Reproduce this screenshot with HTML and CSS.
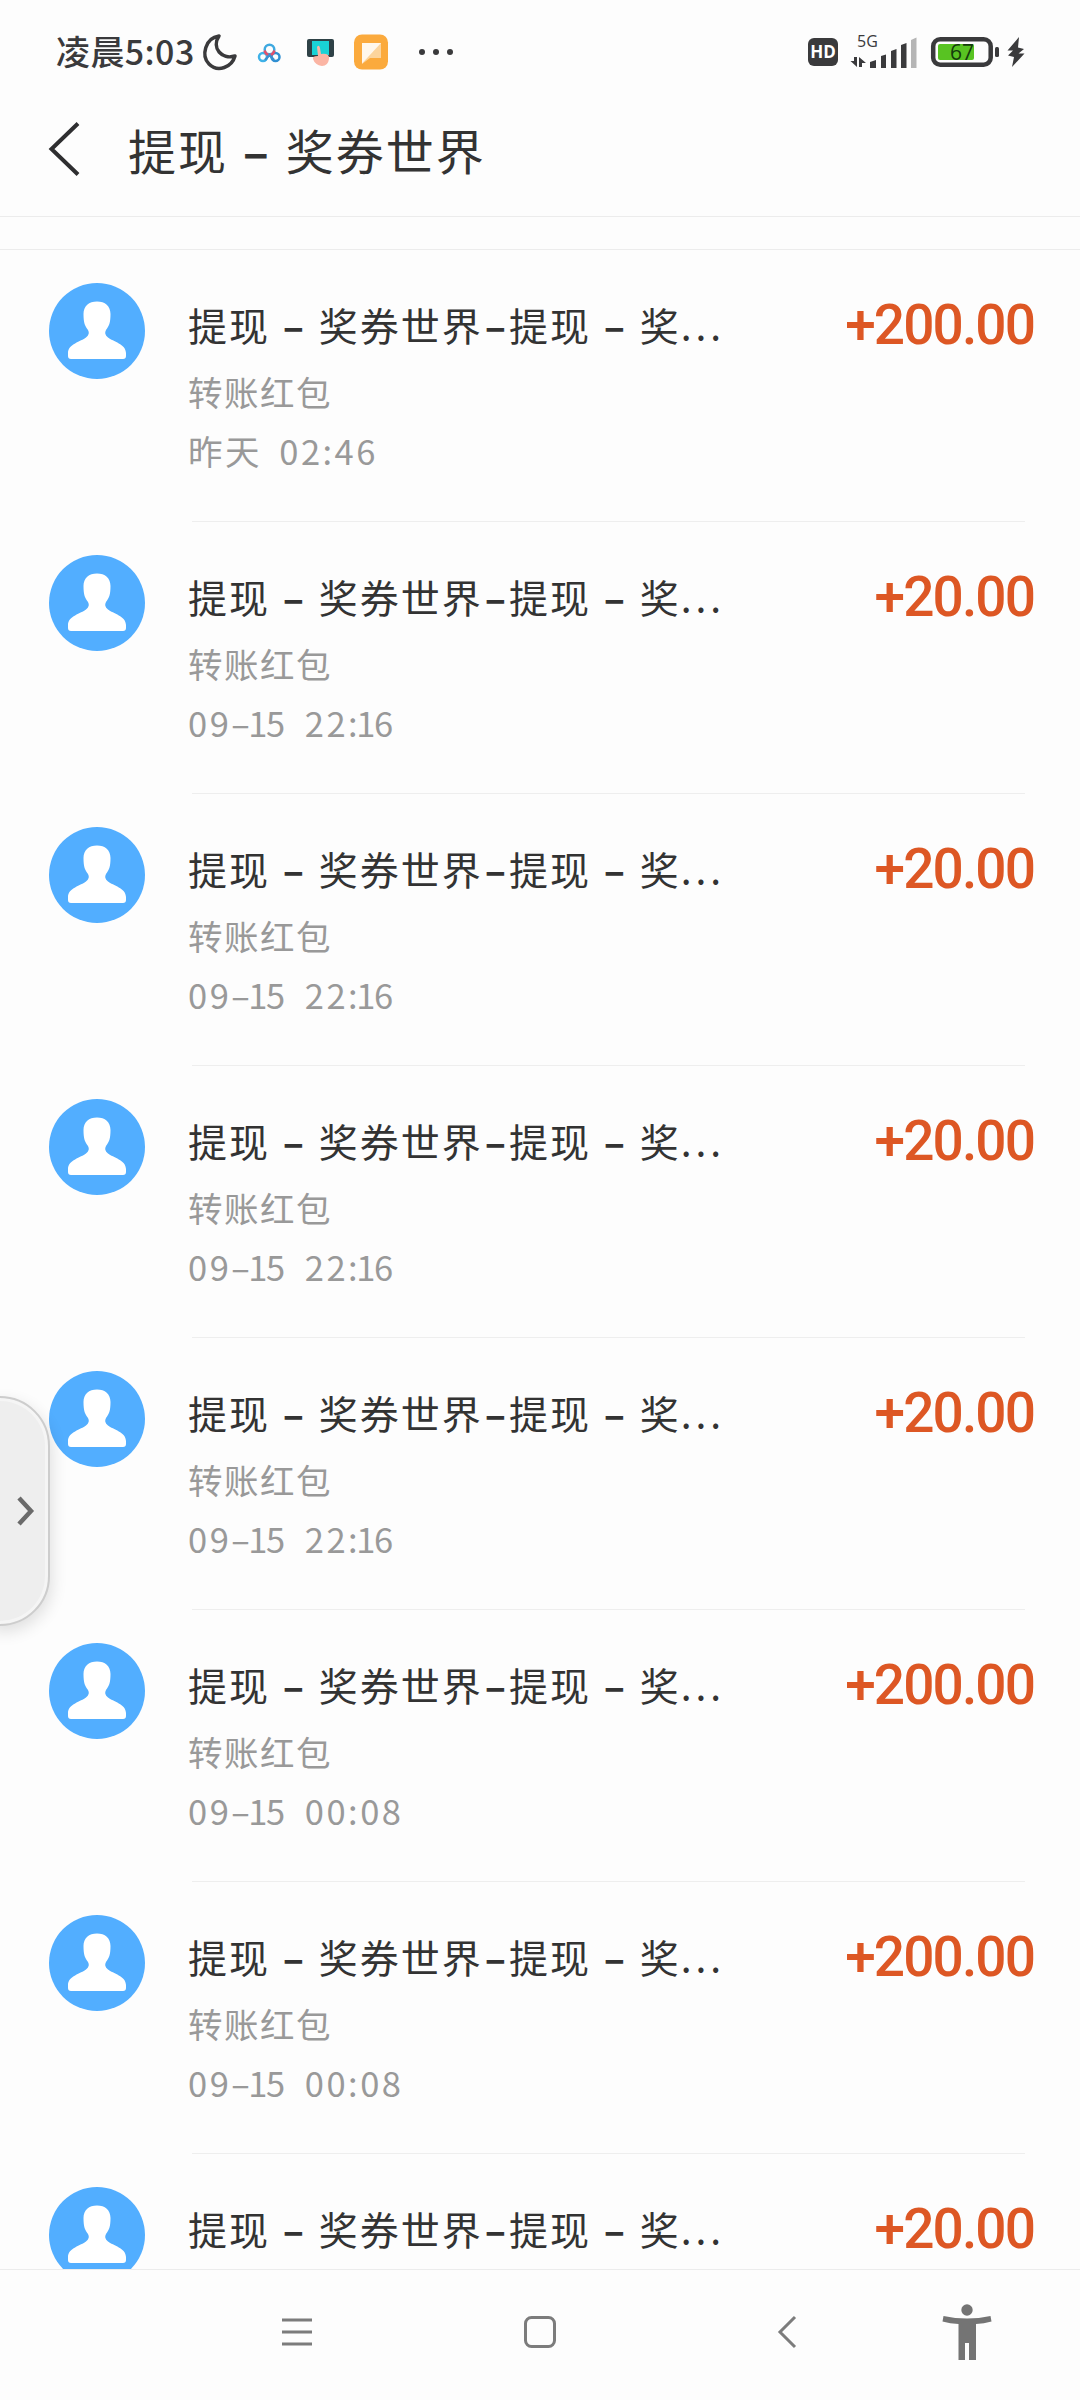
FILE: index.html
```html
<!DOCTYPE html>
<html lang="zh-CN">
<head>
    <meta charset="UTF-8">
    <meta name="viewport" content="width=device-width, initial-scale=1.0">
    <title>提现 – 奖券世界</title>
    <link rel="stylesheet" href="styles.css">
</head>
<body>
    <!-- Avatar partagé -->
    <svg width="0" height="0" class="defs">
        <symbol id="avatar" viewBox="0 0 96 96">
            <circle cx="48" cy="48" r="48" fill="#52aeff"/>
            <path d="M48 18.500C56 18.500 61.500 23 61.500 31C61.500 40 60 43 57 47C55.500 49.500 56 52 59 54.500C64 58.500 77 61 77 70V73Q77 76 74 76H22Q19 76 19 73V70C19 61 32 58.500 37 54.500C40 52 40.500 49.500 39 47C36 43 34.500 40 34.500 31C34.500 23 40 18.500 48 18.500Z" fill="#fff"/>
        </symbol>
    </svg>

    <div class="screen">
        <div class="status-bar">
            <span class="clock">凌晨5:03</span>
            <svg class="status-left" width="256" height="44" viewBox="0 0 256 44">
                <path d="M19 7C5 9 1 27 9 35C18 44 32 38 35 27C22 31 11 19 19 7Z" fill="none" stroke="#3a3a3c" stroke-width="3.500" stroke-linejoin="round"/>
                <g fill="none" stroke-width="2.500">
                    <circle cx="63" cy="28" r="4" stroke="#3fb2e8"/>
                    <circle cx="75.500" cy="28" r="4" stroke="#2f8fd2"/>
                    <circle cx="69.500" cy="20.500" r="4.800" stroke="#3fa9e0"/>
                    <path d="M64.500 21.500Q66 26 69.500 26Q73 26 74.500 21.500" stroke="#e4506a"/>
                    <path d="M65 31L69.500 26L74 31" stroke="#3a8fd0"/>
                </g>
                <rect x="107" y="10" width="27" height="18" rx="2" fill="#2f4247"/>
                <rect x="112" y="12" width="17" height="14" fill="#19d3d6"/>
                <path d="M117 18Q119 15 120 19L121 25Q130 24 129 30Q128 37 122 37Q115 36 113 30Q112 27 118 27Z" fill="#fbb5a4"/>
                <rect x="154" y="5.500" width="34" height="35" rx="8" fill="#fbaa3d"/>
                <path d="M162 14H181V29H170L162 35Z" fill="#fcd49c"/>
                <path d="M162 14H181L162 34.500Z" fill="#fff7ec"/>
                <g fill="#3a3a3c"><circle cx="222" cy="23" r="3"/><circle cx="236" cy="23" r="3"/><circle cx="250" cy="23" r="3"/></g>
            </svg>
            <svg class="status-right" width="218" height="52" viewBox="807 26 218 52">
                <rect x="808" y="38" width="30" height="28" rx="6" fill="#3a3a3c"/>
                <text x="823" y="58" class="hd">HD</text>
                <text x="857" y="46.500" class="net">5G</text>
                <g fill="#3a3a3c">
                    <path d="M854 57H857V67L850.500 61H854ZM859 67V57L866 63H862V67Z"/>
                    <path d="M870 68V62L876 60V68Z"/>
                    <path d="M881 68V56L886 54.500V68Z"/>
                    <path d="M891 68V51L896.500 49V68Z"/>
                    <path d="M901 68V45L906.500 43V68Z"/>
                </g>
                <path d="M911 68V40L916.500 37.500V68Z" fill="#b5b5b5"/>
                <rect x="933.200" y="39.200" width="57.500" height="25.500" rx="7" fill="none" stroke="#3a3a3c" stroke-width="4.500"/>
                <rect x="938" y="44" width="36" height="16" rx="2" fill="#58c322"/>
                <text x="962" y="60.300" class="level">67</text>
                <rect x="995" y="47" width="4" height="10" rx="1.500" fill="#3a3a3c"/>
                <path d="M1019 37L1007.500 50.500H1013L1008 55.500L1014 57L1012 67L1024.500 53.500H1018.500L1024 49L1018 47.500Z" fill="#3a3a3c"/>
            </svg>
        </div>

        <div class="header">
            <svg class="back" width="32" height="54" viewBox="0 0 32 54">
                <path d="M30 1.500L3.500 27L30 52.500" fill="none" stroke="#2e2e30" stroke-width="4"/>
            </svg>
            <h1>提现 <b>–</b> 奖券世界</h1>
        </div>
        <div class="gap"></div>

        <div class="list">
            <div class="item">
                <svg class="avatar"><use href="#avatar"/></svg>
                <div class="info">
                    <p class="name">提现 <b>–</b> 奖券世界<b class="joint">–</b>提现 <b>–</b> 奖<i>...</i></p>
                    <p class="type">转账红包</p>
                    <p class="date">昨天 02:46</p>
                </div>
                <span class="amount">+200.00</span>
            </div>
            <div class="item">
                <svg class="avatar"><use href="#avatar"/></svg>
                <div class="info">
                    <p class="name">提现 <b>–</b> 奖券世界<b class="joint">–</b>提现 <b>–</b> 奖<i>...</i></p>
                    <p class="type">转账红包</p>
                    <p class="date">09–<i>1</i>5 22:<i>1</i>6</p>
                </div>
                <span class="amount">+20.00</span>
            </div>
            <div class="item">
                <svg class="avatar"><use href="#avatar"/></svg>
                <div class="info">
                    <p class="name">提现 <b>–</b> 奖券世界<b class="joint">–</b>提现 <b>–</b> 奖<i>...</i></p>
                    <p class="type">转账红包</p>
                    <p class="date">09–<i>1</i>5 22:<i>1</i>6</p>
                </div>
                <span class="amount">+20.00</span>
            </div>
            <div class="item">
                <svg class="avatar"><use href="#avatar"/></svg>
                <div class="info">
                    <p class="name">提现 <b>–</b> 奖券世界<b class="joint">–</b>提现 <b>–</b> 奖<i>...</i></p>
                    <p class="type">转账红包</p>
                    <p class="date">09–<i>1</i>5 22:<i>1</i>6</p>
                </div>
                <span class="amount">+20.00</span>
            </div>
            <div class="item">
                <svg class="avatar"><use href="#avatar"/></svg>
                <div class="info">
                    <p class="name">提现 <b>–</b> 奖券世界<b class="joint">–</b>提现 <b>–</b> 奖<i>...</i></p>
                    <p class="type">转账红包</p>
                    <p class="date">09–<i>1</i>5 22:<i>1</i>6</p>
                </div>
                <span class="amount">+20.00</span>
            </div>
            <div class="item">
                <svg class="avatar"><use href="#avatar"/></svg>
                <div class="info">
                    <p class="name">提现 <b>–</b> 奖券世界<b class="joint">–</b>提现 <b>–</b> 奖<i>...</i></p>
                    <p class="type">转账红包</p>
                    <p class="date">09–<i>1</i>5 00:08</p>
                </div>
                <span class="amount">+200.00</span>
            </div>
            <div class="item">
                <svg class="avatar"><use href="#avatar"/></svg>
                <div class="info">
                    <p class="name">提现 <b>–</b> 奖券世界<b class="joint">–</b>提现 <b>–</b> 奖<i>...</i></p>
                    <p class="type">转账红包</p>
                    <p class="date">09–<i>1</i>5 00:08</p>
                </div>
                <span class="amount">+200.00</span>
            </div>
            <div class="item">
                <svg class="avatar"><use href="#avatar"/></svg>
                <div class="info">
                    <p class="name">提现 <b>–</b> 奖券世界<b class="joint">–</b>提现 <b>–</b> 奖<i>...</i></p>
                </div>
                <span class="amount">+20.00</span>
            </div>
        </div>

        <div class="nav-bar">
            <svg class="menu" width="32" height="60" viewBox="0 0 32 60">
                <path d="M1 18H31M1 30H31M1 42H31" stroke="#7c7c7c" stroke-width="3"/>
            </svg>
            <svg class="home" width="34" height="60" viewBox="0 0 34 60">
                <rect x="2.500" y="15.500" width="29" height="29" rx="6" fill="none" stroke="#7c7c7c" stroke-width="3"/>
            </svg>
            <svg class="prev" width="20" height="60" viewBox="0 0 20 60">
                <path d="M18 15L3 30L18 45" fill="none" stroke="#7c7c7c" stroke-width="3"/>
            </svg>
            <svg width="50" height="60" viewBox="0 0 50 60">
                <circle cx="25" cy="8" r="5.700" fill="#747474"/>
                <path d="M1.500 14Q25 19 48.500 14L49.500 19.500Q42 21.500 34 22V58H27V41H23V58H16.500V22Q8 21.500 0.500 19.500Z" fill="#747474"/>
            </svg>
        </div>

        <!-- Poignée latérale -->
        <div class="handle">
            <svg width="18" height="30" viewBox="0 0 18 30">
                <path d="M2 2L14 15L2 28" fill="none" stroke="#6a6a6a" stroke-width="4.500"/>
            </svg>
        </div>
    </div>
</body>
</html>
```
FILE: styles.css
```css
* {
    box-sizing: border-box;
}
body {
    margin: 0;
    background-color: #fdfdfd;
    color: #333;
    font-family: "Noto Sans CJK SC", sans-serif;
}
h1, p {
    margin: 0;
    font-weight: normal;
    white-space: nowrap;
}
h1 b, p b {
    font-weight: 700;
}
p i {
    font-style: normal;
}
.defs {
    position: absolute;
}
.screen {
    position: relative;
    width: 1080px;
    height: 2400px;
    overflow: hidden;
    display: flex;
    flex-direction: column;
}
.status-bar {
    height: 104px;
    padding: 0 55px 0 56px;
    display: flex;
    align-items: center;
}
.clock {
    width: 144px;
    margin-top: -3px;
    font-size: 34px;
    font-weight: 500;
    letter-spacing: 0.4px;
    color: #3a3a3c;
    white-space: nowrap;
}
.status-left {
    margin-top: -2px;
}
.status-right {
    margin-left: auto;
}
.hd, .level {
    text-anchor: middle;
}
.hd {
    font: bold 17px "Open Sans", sans-serif;
    fill: #fff;
}
.net {
    font: 16px "Open Sans", sans-serif;
    fill: #3a3a3c;
}
.level {
    font: 500 21px "Open Sans", sans-serif;
    fill: #143c0c;
}
.header {
    height: 113px;
    padding-left: 48px;
    display: flex;
    align-items: flex-start;
    border-bottom: 1px solid #ececec;
}
.back {
    margin-top: 18px;
}
h1 {
    margin-left: 48px;
    margin-top: 10px;
    font-size: 48px;
    line-height: 70px;
    letter-spacing: 2px;
    word-spacing: 2px;
}
.gap {
    height: 33px;
    border-bottom: 1px solid #ececec;
}
.list {
    height: 2019px;
    overflow: hidden;
    padding-top: 8px;
}
.item {
    height: 272px;
    padding: 25px 46px 0 49px;
    display: flex;
    align-items: flex-start;
}
.avatar {
    width: 96px;
    height: 96px;
    flex: none;
}
/* le trait commence un peu après le bord du texte */
.info {
    width: 833px;
    height: 239px;
    margin-left: 47px;
    margin-right: -833px;
    border-bottom: 1px solid #eee;
    flex: none;
}
.info p {
    margin-left: -4px;
}
.name {
    margin-top: 11px;
    font-size: 39px;
    line-height: 60px;
    letter-spacing: 2px;
    word-spacing: 2px;
}
.joint {
    margin: 0 1px 0 2px;
}
.name i {
    letter-spacing: 4px;
}
.type, .date {
    font-size: 34.5px;
    line-height: 60px;
    letter-spacing: 1.5px;
    color: #999;
}
.type {
    margin-top: 7px;
}
.date {
    margin-top: -1px;
    letter-spacing: 2.5px;
    word-spacing: 7px;
}
.date i {
    margin: 0 -4px 0 -4px;
}
.amount {
    margin-left: auto;
    margin-top: 10px;
    font-family: Roboto, sans-serif;
    font-size: 55px;
    font-weight: 500;
    line-height: 64px;
    letter-spacing: -1.9px;
    color: #dd5724;
}
.nav-bar {
    height: 131px;
    padding: 32px 0 0 281px;
    display: flex;
    align-items: flex-start;
    border-top: 1px solid #ececec;
}
.menu {
    margin-right: 210px;
}
.home {
    margin-right: 220px;
}
.prev {
    margin-right: 145px;
}
.handle {
    position: absolute;
    left: -10px;
    top: 1396px;
    width: 60px;
    height: 230px;
    padding-left: 25px;
    display: flex;
    align-items: center;
    background: #eee;
    border: 2px solid #cdcdcd;
    border-radius: 0 50px 50px 0;
    box-shadow: inset 0 0 0 3px #f5f5f5, 2px 6px 16px rgba(0, 0, 0, 0.12);
}
```
